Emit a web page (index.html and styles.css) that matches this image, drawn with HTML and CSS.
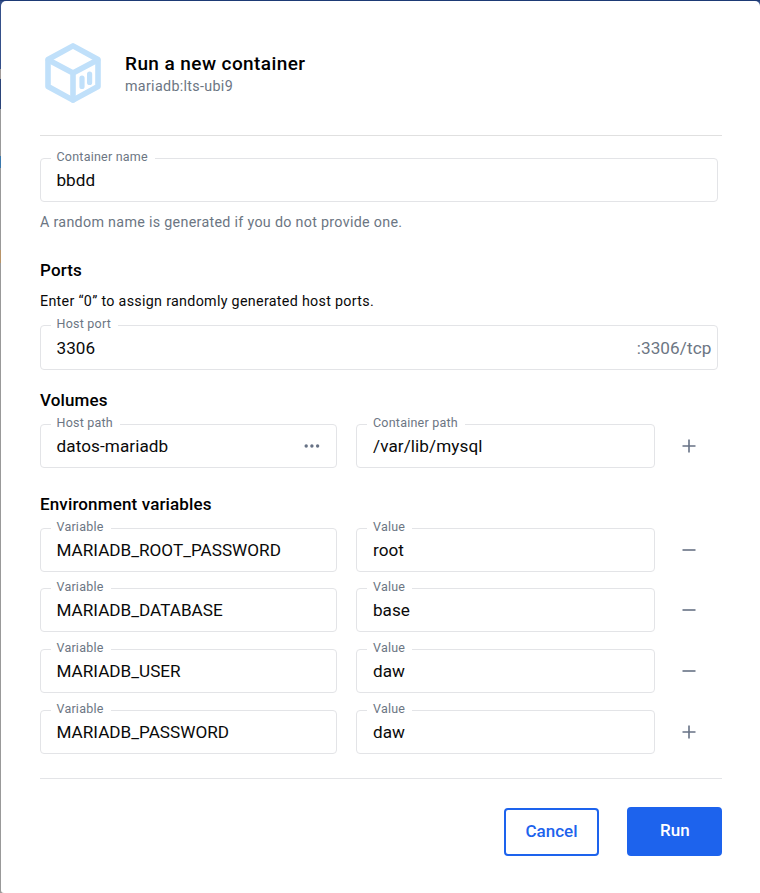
FILE: index.html
```html
<!DOCTYPE html>
<html lang="en">
<head>
<meta charset="utf-8">
<title>Run a new container</title>
<link rel="stylesheet" href="styles.css">
</head>
<body>
<main class="dialog">
  <header class="header">
    <svg class="logo" viewBox="0 0 56 60" fill="none" stroke="#c0e0fa" stroke-width="5.6" stroke-linejoin="round" stroke-linecap="round">
      <path d="M28 2.9 53 16.5V43.5L28 57.1 3 43.5V16.5Z"/>
      <path d="M3.5 17 28 30 52.5 17M28 30V57"/>
      <path d="M37 35V43.500M44.600 31V39.500" stroke-width="5.200"/>
    </svg>
    <div>
      <h1 class="title">Run a new container</h1>
      <p class="image">mariadb:lts-ubi9</p>
    </div>
  </header>
  <section class="name">
    <div class="field"><label>Container name</label><span class="value">bbdd</span></div>
    <p class="hint">A random name is generated if you do not provide one.</p>
  </section>
  <section class="ports">
    <h2>Ports</h2>
    <p class="note">Enter “0” to assign randomly generated host ports.</p>
    <div class="field"><label>Host port</label><span class="value">3306</span><span class="suffix">:3306/tcp</span></div>
  </section>
  <section class="volumes">
    <h2>Volumes</h2>
    <div class="row">
      <div class="field"><label>Host path</label><span class="value">datos-mariadb</span>
        <svg class="dots" width="16" height="4" viewBox="0 0 16 4" fill="#677285"><circle cx="2.200" cy="2" r="1.700"/><circle cx="7.900" cy="2" r="1.700"/><circle cx="13.600" cy="2" r="1.700"/></svg></div>
      <div class="field"><label>Container path</label><span class="value">/var/lib/mysql</span></div>
      <svg class="action" viewBox="0 0 14 14"><path d="M.5 7h13M7 .5v13"/></svg>
    </div>
  </section>
  <section class="env">
    <h2>Environment variables</h2>
    <div class="rows">
      <div class="row">
        <div class="field"><label>Variable</label><span class="value">MARIADB_ROOT_PASSWORD</span></div>
        <div class="field"><label>Value</label><span class="value">root</span></div>
        <svg class="action" viewBox="0 0 14 14"><path d="M.5 7h13"/></svg>
      </div>
      <div class="row">
        <div class="field"><label>Variable</label><span class="value">MARIADB_DATABASE</span></div>
        <div class="field"><label>Value</label><span class="value">base</span></div>
        <svg class="action" viewBox="0 0 14 14"><path d="M.5 7h13"/></svg>
      </div>
      <div class="row">
        <div class="field"><label>Variable</label><span class="value">MARIADB_USER</span></div>
        <div class="field"><label>Value</label><span class="value">daw</span></div>
        <svg class="action" viewBox="0 0 14 14"><path d="M.5 7h13"/></svg>
      </div>
      <div class="row">
        <div class="field"><label>Variable</label><span class="value">MARIADB_PASSWORD</span></div>
        <div class="field"><label>Value</label><span class="value">daw</span></div>
        <svg class="action" viewBox="0 0 14 14"><path d="M.5 7h13M7 .5v13"/></svg>
      </div>
    </div>
  </section>
  <footer class="footer">
    <button class="btn cancel">Cancel</button>
    <button class="btn run">Run</button>
  </footer>
</main>
</body>
</html>
```
FILE: styles.css
```css
* { box-sizing: border-box; }
body {
  margin: 0;
  height: 893px;
  overflow: hidden;
  padding: 1px 0 0 1px;
  font-family: Roboto, "Liberation Sans", sans-serif;
  color: #0a0a0a;
  background: linear-gradient(#1d3a75 0 1px, #35508a 1px 69px, #a09a98 69px 79px, #2b4479 79px 109px, #999 109px 156px, #3a78ac 156px 168px, #999 168px 250px, #b89468 250px 263px, #999 263px);
}
h1, h2, p { margin: 0; }
.dialog {
  height: 892px;
  padding: 0 37.600px 0 39px;
  background: #fff;
  border-radius: 5px 5px 0 3px;
}
.header {
  display: flex;
  height: 135px;
  padding: 42px 0 0 5px;
  gap: 24px;
  border-bottom: 1px solid #e0e0e0;
}
.logo { width: 56px; height: 60px; }
.title { margin-top: 8px; font-size: 19px; line-height: 26px; font-weight: 500; letter-spacing: .42px; color: #000; }
.image { font-size: 14.300px; line-height: 18px; letter-spacing: .32px; color: #6c7683; }
.name, .ports { padding-right: 4.400px; }
.name { padding-top: 22px; height: 123px; }
.ports { height: 130px; }
.volumes { height: 104px; }
.env { height: 285px; }
h2 { height: 34px; line-height: 22px; font-size: 17px; font-weight: 500; letter-spacing: .14px; color: #000; }
.hint, .note { font-size: 14.300px; letter-spacing: .3px; line-height: 20px; }
.hint { margin-top: 10px; color: #6c7683; }
.note { height: 31px; margin-top: -2px; }
.field {
  position: relative;
  display: flex;
  align-items: center;
  height: 44px;
  padding: 0 5px 1px 15.500px;
  border: 1px solid #e3e4e7;
  border-radius: 4px;
  font-size: 17.150px;
}
.ports .field { height: 45px; margin-top: 3px; padding-top: 1px; padding-right: 5.500px; }
.env .field { padding-bottom: 0; }
.volumes .row { margin-top: 35px; }
.volumes h2, .env h2 { margin-bottom: -34px; }
.env .rows { padding-top: 34.600px; }
.field label {
  position: absolute;
  left: 9.500px;
  top: -11px;
  padding: 0 7px 0 6px;
  line-height: 18px;
  font-size: 12.500px;
  letter-spacing: .22px;
  color: #6c7683;
  background: #fff;
}
.suffix { margin-left: auto; color: #6c7683; letter-spacing: .1px; }
.dots { margin: 0 11.500px 0 auto; }
.volumes .value { letter-spacing: .08px; }
.row { display: grid; grid-template-columns: 297px 299px 14px; column-gap: 19px; align-items: center; }
.row .field:nth-child(2) { padding-left: 16px; }
.row .field:nth-child(2) label { left: 10px; }
.rows { display: grid; row-gap: 16.700px; }
.action { width: 14px; height: 14px; margin-left: 8px; stroke: #677285; stroke-width: 1.600; overflow: visible; }
.footer { display: flex; justify-content: flex-end; gap: 28.400px; padding-top: 28px; border-top: 1px solid #e3e4e7; }
.btn { width: 95px; height: 48.500px; border: 2px solid #1d63ed; border-radius: 4px; font: 500 17px/22px Roboto, sans-serif; padding: 0 0 2px; }
.cancel { margin-top: .6px; height: 48px; color: #1d63ed; background: #fff; }
.run { color: #fff; background: #1d63ed; }
```
